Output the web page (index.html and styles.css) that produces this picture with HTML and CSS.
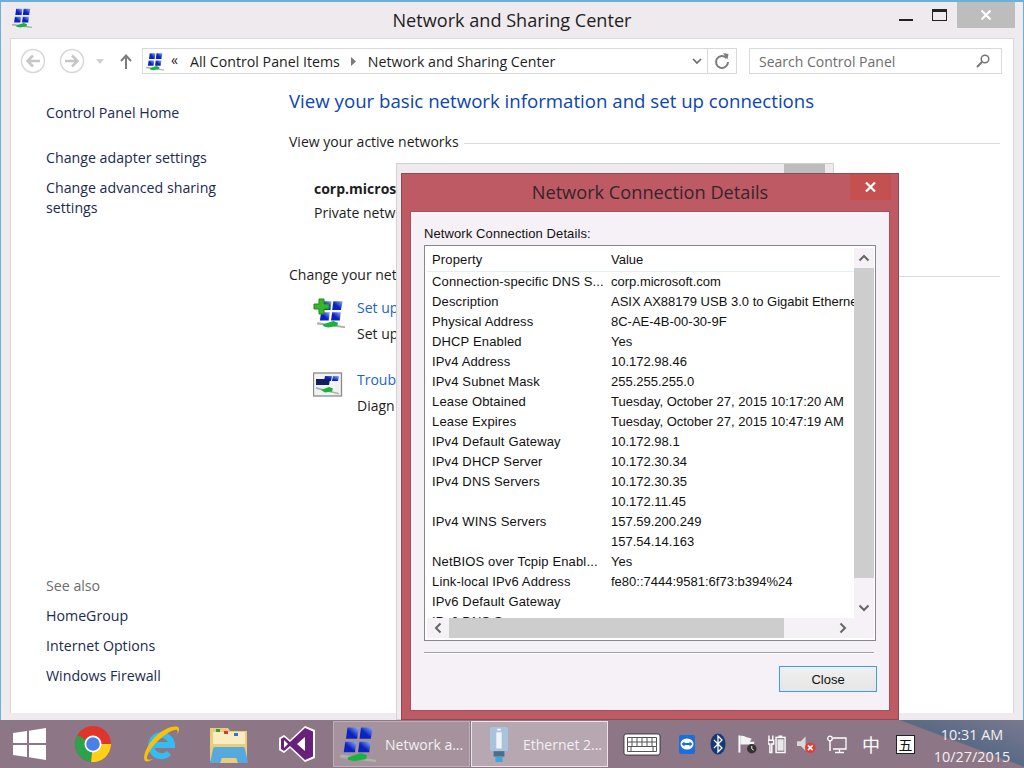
FILE: index.html
```html
<!DOCTYPE html>
<html>
<head>
  <title>Network and Sharing Center</title>
  <link rel="stylesheet" href="styles.css">
</head>
<body>
  <svg class="defs" width="0" height="0">
    <defs>
      <linearGradient id="pane" x1="0" y1="1" x2="1" y2="0">
        <stop offset="0.450" stop-color="#0a22c0"/>
        <stop offset="1" stop-color="#8fb6f7"/>
      </linearGradient>
    </defs>
    <symbol id="netIcon" viewBox="0 0 24 24">
      <path d="M5 1h7.500l-1 7.500H4z" fill="url(#pane)"/>
      <path d="M14 1h8l-1.500 7.500H13z" fill="url(#pane)"/>
      <path d="M3.500 10.500H11l-1 7H2.500z" fill="url(#pane)"/>
      <path d="M13 10.500h7.500l-1 7H12z" fill="url(#pane)"/>
      <path d="M0 19.500l1-.5 23 3.500V24h-1L0 21z" fill="#a9b4ae"/>
      <path d="M5 21l9-3 4 1.500-.5 2.500-8 1.500-4-1z" fill="#18b33e"/>
    </symbol>
  </svg>

  <div class="desktop">
    <div class="window">
      <div class="titlebar">
        <svg class="title-icon"><use href="#netIcon"/></svg>
        <span class="title-text">Network and Sharing Center</span>
        <div class="win-controls">
          <span class="win-min"></span>
          <span class="win-max"></span>
          <span class="win-close">
            <svg width="12" height="12" viewBox="0 0 12 12"><path d="M1.500 1.500l9 9M10.500 1.500l-9 9" stroke="#fff" stroke-width="2.200"/></svg>
          </span>
        </div>
      </div>

      <div class="client">
        <div class="toolbar">
          <span class="nav-btn">
            <svg width="26" height="26" viewBox="0 0 26 26"><circle cx="13" cy="13" r="11.500" fill="none" stroke="#d8d8d8" stroke-width="1.500"/><path d="M20 13H8M13 7.500L7.500 13l5.500 5.500" fill="none" stroke="#c6c6c6" stroke-width="2.500"/></svg>
          </span>
          <span class="nav-btn">
            <svg width="26" height="26" viewBox="0 0 26 26"><circle cx="13" cy="13" r="11.500" fill="none" stroke="#d8d8d8" stroke-width="1.500"/><path d="M6 13h12M13 7.500l5.500 5.500-5.500 5.500" fill="none" stroke="#c6c6c6" stroke-width="2.500"/></svg>
          </span>
          <svg class="nav-drop" width="8" height="5" viewBox="0 0 8 5"><path d="M0 0h8L4 5z" fill="#d0d0d0"/></svg>
          <svg class="nav-up" width="12" height="15" viewBox="0 0 12 15"><path d="M6 15V2M1 7l5-5.500L11 7" fill="none" stroke="#7d7d7d" stroke-width="2"/></svg>

          <div class="address">
            <svg class="addr-icon"><use href="#netIcon"/></svg>
            <span class="addr-more">«</span>
            <span class="crumb">All Control Panel Items</span>
            <svg class="crumb-arrow" width="5" height="9" viewBox="0 0 5 9"><path d="M0 0l5 4.500L0 9z" fill="#7a7a7a"/></svg>
            <span class="crumb">Network and Sharing Center</span>
            <svg class="addr-drop" width="10" height="7" viewBox="0 0 10 7"><path d="M1 1l4 4 4-4" fill="none" stroke="#6d6d6d" stroke-width="1.700"/></svg>
            <span class="addr-refresh">
              <svg width="16" height="17" viewBox="0 0 16 17"><path d="M12.500 5A6 6 0 1 0 14 9" fill="none" stroke="#7d7d7d" stroke-width="2"/><path d="M9 0l5.500 1-1 5.500z" fill="#7d7d7d"/></svg>
            </span>
          </div>

          <div class="search">
            <span>Search Control Panel</span>
            <svg width="14" height="14" viewBox="0 0 14 14"><circle cx="9" cy="5" r="3.800" fill="none" stroke="#757575" stroke-width="1.500"/><path d="M6 8l-5 5" stroke="#757575" stroke-width="2"/></svg>
          </div>
        </div>

        <div class="columns">
          <nav class="sidebar">
            <div class="side-top">
              <a>Control Panel Home</a>
              <a class="gap">Change adapter settings</a>
              <a>Change advanced sharing settings</a>
            </div>
            <div class="side-bottom">
              <div class="see-also">See also</div>
              <a>HomeGroup</a>
              <a>Internet Options</a>
              <a>Windows Firewall</a>
            </div>
          </nav>

          <main class="content">
            <h1>View your basic network information and set up connections</h1>
            <div class="section-head">View your active networks</div>
            <div class="active-net">
              <b>corp.micros</b>
              <span>Private netw</span>
            </div>
            <div class="section-head">Change your net</div>
            <div class="task">
              <svg class="task-icon" viewBox="0 0 32 32"><use href="#netIcon" x="4" y="2" width="28" height="28"/><path d="M6 1h5v5h5v5h-5v5H6v-5H1V6h5z" fill="#39b52a" stroke="#1f8a1a"/></svg>
              <div>
                <a>Set up</a>
                <p>Set up</p>
              </div>
            </div>
            <div class="task">
              <svg class="task-icon" viewBox="0 0 32 32">
                <rect x="0.500" y="3" width="28" height="23" fill="#f2f2f2" stroke="#8a8a8a" stroke-width="1.300"/>
                <path d="M12 6h7l-1 5h-7zM20 6h6l-1 5h-6z" fill="url(#pane)"/>
                <path d="M11 5v7h-7" fill="none" stroke="#1c2a5c" stroke-width="0"/>
                <path d="M3 9h14l-1 6H3z" fill="#12205e"/>
                <path d="M3 17l23 6v1.500L3 19z" fill="#a9b4ae"/>
                <path d="M8 20l8-3 4 1.500-1 3-7 1z" fill="#18b33e"/>
              </svg>
              <div>
                <a>Troub</a>
                <p>Diagn</p>
              </div>
            </div>
          </main>
        </div>
      </div>
    </div>

    <div class="back-dialog">
      <span class="back-close"></span>
    </div>

    <div class="dialog">
      <div class="dialog-title">
        <span>Network Connection Details</span>
        <span class="dialog-close">
          <svg width="11" height="10" viewBox="0 0 11 10"><path d="M1 0.500l9 9M10 0.500l-9 9" stroke="#fff" stroke-width="2.200"/></svg>
        </span>
      </div>
      <div class="dialog-body">
        <div class="dialog-label">Network Connection Details:</div>
        <div class="listbox">
          <div class="list-view">
            <div class="list-row list-head"><span>Property</span><span>Value</span></div>
            <div class="list-rows">
              <div class="list-row"><span>Connection-specific DNS S...</span><span>corp.microsoft.com</span></div>
              <div class="list-row"><span>Description</span><span>ASIX AX88179 USB 3.0 to Gigabit Ethernet Adapter</span></div>
              <div class="list-row"><span>Physical Address</span><span>8C-AE-4B-00-30-9F</span></div>
              <div class="list-row"><span>DHCP Enabled</span><span>Yes</span></div>
              <div class="list-row"><span>IPv4 Address</span><span>10.172.98.46</span></div>
              <div class="list-row"><span>IPv4 Subnet Mask</span><span>255.255.255.0</span></div>
              <div class="list-row"><span>Lease Obtained</span><span>Tuesday, October 27, 2015 10:17:20 AM</span></div>
              <div class="list-row"><span>Lease Expires</span><span>Tuesday, October 27, 2015 10:47:19 AM</span></div>
              <div class="list-row"><span>IPv4 Default Gateway</span><span>10.172.98.1</span></div>
              <div class="list-row"><span>IPv4 DHCP Server</span><span>10.172.30.34</span></div>
              <div class="list-row"><span>IPv4 DNS Servers</span><span>10.172.30.35</span></div>
              <div class="list-row"><span></span><span>10.172.11.45</span></div>
              <div class="list-row"><span>IPv4 WINS Servers</span><span>157.59.200.249</span></div>
              <div class="list-row"><span></span><span>157.54.14.163</span></div>
              <div class="list-row"><span>NetBIOS over Tcpip Enabl...</span><span>Yes</span></div>
              <div class="list-row"><span>Link-local IPv6 Address</span><span>fe80::7444:9581:6f73:b394%24</span></div>
              <div class="list-row"><span>IPv6 Default Gateway</span><span></span></div>
              <div class="list-row"><span>IPv6 DNS Servers</span><span></span></div>
            </div>
          </div>
          <div class="vscroll">
            <svg width="12" height="8" viewBox="0 0 12 8"><path d="M1.500 6.500L6 2l4.500 4.500" fill="none" stroke="#666" stroke-width="2"/></svg>
            <div class="vtrack"><div class="vthumb"></div></div>
            <svg width="12" height="8" viewBox="0 0 12 8"><path d="M1.500 1.500L6 6l4.500-4.500" fill="none" stroke="#666" stroke-width="2"/></svg>
          </div>
          <div class="hscroll">
            <svg width="8" height="12" viewBox="0 0 8 12"><path d="M6.500 1.500L2 6l4.500 4.500" fill="none" stroke="#666" stroke-width="2"/></svg>
            <div class="htrack"><div class="hthumb"></div></div>
            <svg width="8" height="12" viewBox="0 0 8 12"><path d="M1.500 1.500L6 6l-4.500 4.500" fill="none" stroke="#666" stroke-width="2"/></svg>
          </div>
        </div>
        <div class="dialog-rule"></div>
        <div class="dialog-actions"><button class="close-btn">Close</button></div>
      </div>
    </div>

    <div class="taskbar">
      <div class="pinned">
        <span class="pin pin-start">
          <svg width="34" height="34" viewBox="0 0 34 34"><path d="M0 6l14-2v12H0zM16 3.700L33 1v15H16zM0 18h14v12L0 28zM16 18h17v15l-17-2.700z" fill="#fff"/></svg>
        </span>
        <span class="pin">
          <svg width="38" height="38" viewBox="0 0 38 38">
            <circle cx="19" cy="19" r="18" fill="#e0352b"/>
            <path d="M19 19L3.400 10A18 18 0 0 0 17 36.900z" fill="#2ba24c"/>
            <path d="M19 19h18A18 18 0 0 1 17 36.900z" fill="#fcd116"/>
            <circle cx="19" cy="19" r="8.500" fill="#fff"/>
            <circle cx="19" cy="19" r="6.800" fill="#4a80e8"/>
          </svg>
        </span>
        <span class="pin">
          <svg width="38" height="38" viewBox="0 0 38 38">
            <path d="M10 20h20a10.500 10.500 0 1 0-3 8" fill="none" stroke="#35bdf0" stroke-width="6"/>
            <path d="M36 2c-6-2-16 3-24 11C5 21 0 31 3 36c2 1 5 0 8-2-4 1-6 1-6-1 0-4 6-13 13-19 7-6 14-10 17-9 1 1 1 3-1 6 3-4 4-7 2-9z" fill="#f4c20d"/>
          </svg>
        </span>
        <span class="pin">
          <svg width="40" height="38" viewBox="0 0 40 38">
            <path d="M1 3h18l2 3h17v30H1z" fill="#e9cd7c"/>
            <path d="M4 7h32v12H4z" fill="#f8ecc0"/>
            <path d="M7 4h4v3H7z" fill="#3a9a3c"/><path d="M15 6h4v3h-4z" fill="#d9382b"/><path d="M25 8h4v3h-4z" fill="#2a78c8"/>
            <path d="M6 22h28a2 2 0 0 1 2 2l3 14h-10l-2-5H13l-2 5H1l3-14a2 2 0 0 1 2-2z" fill="#55a9dd"/>
            <path d="M13 33h14l2 5H11z" fill="#e9cd7c"/>
          </svg>
        </span>
        <span class="pin">
          <svg width="38" height="38" viewBox="0 0 38 38">
            <path d="M27 1l10 4v28l-10 4-15-14-6 5-5-3V13l5-3 6 5z" fill="#fff"/>
            <path d="M27 3l8 3.500v25L27 35 12 21l-6 5-3-2V14l3-2 6 5zM27 12l-8 7 8 7zM6 15v8l4-4z" fill="#68217a" fill-rule="evenodd"/>
          </svg>
        </span>
      </div>

      <div class="task-btn">
        <svg class="task-btn-icon"><use href="#netIcon"/></svg>
        <span>Network a...</span>
      </div>
      <div class="task-btn active">
        <svg class="task-btn-icon" viewBox="0 0 24 40"><rect x="2" y="1" width="20" height="27" rx="2" fill="#a9c3dc"/><rect x="9" y="7" width="6" height="18" fill="#f0f4f8"/><rect x="10" y="3" width="4" height="2" fill="#fff"/><rect x="6" y="28" width="12" height="6" fill="#4e6c8c"/><rect x="8" y="34" width="8" height="6" fill="#3aa9d8"/></svg>
        <span>Ethernet 2...</span>
      </div>

      <div class="tray">
        <svg class="keyboard" width="38" height="23" viewBox="0 0 38 23">
          <rect x="1" y="1" width="36" height="21" rx="2" fill="#fff" stroke="#222" stroke-width="0.800"/>
          <path d="M4.500 4.500h29v9h-29zM4.500 9h29M9 4.500v9M14 4.500v9M19 4.500v9M24 4.500v9M29 4.500v9M8 13.500v5h22v-5M4.500 13.500v5h3.500M30 18.500h3.500v-5" fill="none" stroke="#555" stroke-width="1"/>
        </svg>
        <svg class="tray-viewer" width="18" height="22" viewBox="0 0 18 22"><rect x="1" y="2" width="16" height="19" rx="2" fill="#1a6fe0"/><ellipse cx="9" cy="11" rx="6.500" ry="5.500" fill="#fff"/><path d="M3.500 11l3-2.500v1.500h5V8.500l3 2.500-3 2.500V12h-5v1.500z" fill="#1a6fe0"/></svg>
        <svg class="tray-bt" width="16" height="22" viewBox="0 0 16 22"><ellipse cx="8" cy="11" rx="7.500" ry="10.500" fill="#123a78"/><path d="M4 7l8 8-4 4V3l4 4-8 8" fill="none" stroke="#fff" stroke-width="1.300"/></svg>
        <svg class="tray-flag" width="19" height="20" viewBox="0 0 20 20"><path d="M1.500 1v18" stroke="#fff" stroke-width="2"/><path d="M2.500 1.500c4-1 6 2 9 2l3 1-2 3 5 0-1 3H2.500z" fill="#f3f3f3"/><circle cx="14.500" cy="15" r="5" fill="#333"/><path d="M14.500 12v3l2 1.500" fill="none" stroke="#fff"/></svg>
        <svg width="18" height="20" viewBox="0 0 19 20"><path d="M1 1v5M5 1v5M0 6h6v4H4v9H2v-9H0z" fill="none" stroke="#fff" stroke-width="1.500"/><rect x="8.500" y="3" width="9.500" height="16" fill="none" stroke="#fff" stroke-width="1.500"/><rect x="11" y="1" width="4" height="2" fill="#fff"/><rect x="10" y="5" width="6.500" height="12" fill="#e8e8e8"/></svg>
        <svg width="19" height="20" viewBox="0 0 20 20"><path d="M0 7h4l5-5v15l-5-5H0z" fill="#d8d8d8"/><circle cx="14" cy="14" r="5.500" fill="#e53a32"/><path d="M11.500 11.500l5 5M16.500 11.500l-5 5" stroke="#fff" stroke-width="1.700"/></svg>
        <svg width="20" height="19" viewBox="0 0 20 19"><circle cx="3" cy="3.500" r="2.300" fill="none" stroke="#fff" stroke-width="1.300"/><path d="M3 6v10" stroke="#fff" stroke-width="1.500"/><path d="M6 3h13v11H6M12.500 14v3M8 17.500h9" fill="none" stroke="#fff" stroke-width="1.300"/></svg>
        <span class="ime">中</span>
        <span class="ime-box">五</span>
        <div class="clock"><div>10:31 AM</div><div>10/27/2015</div></div>
      </div>
    </div>
  </div>
</body>
</html>
```

FILE: styles.css
```css
* { box-sizing: border-box; }
html, body { margin: 0; padding: 0; overflow: hidden; }
a { display: block; }
.defs { position: absolute; }

.desktop {
  position: relative;
  width: 1024px;
  height: 768px;
  overflow: hidden;
  background: linear-gradient(160deg, #4a8fc0, #2d6c9f);
  font-family: "Open Sans", "Noto Sans", sans-serif;
}

/* main explorer window */
.window {
  position: absolute;
  left: 0;
  top: 0;
  width: 1024px;
  height: 720px;
  display: flex;
  flex-direction: column;
  background: #efeaee;
  border: 1px solid #6ab0dc;
  border-width: 2px 1px 0 1px;
}
.titlebar {
  height: 35px;
  display: flex;
  align-items: center;
  position: relative;
  flex: none;
}
.title-icon { width: 20px; height: 20px; margin: -3px 0 0 11px; }
.title-text {
  position: absolute;
  left: 0;
  right: 0;
  top: 5px;
  text-align: center;
  font-size: 18.100px;
  line-height: 26px;
  color: #1d1d1d;
}
.win-controls {
  position: absolute;
  right: 8px;
  top: 0;
  height: 26px;
  display: flex;
  align-items: flex-start;
}
.win-min { width: 14px; height: 2px; background: #222; margin: 17px 19px 0 0; }
.win-max { width: 15px; height: 12px; border: 1px solid #222; border-top-width: 3px; margin: 7px 10px 0 0; }
.win-close {
  width: 58px;
  height: 26px;
  background: #bdbdbd;
  display: flex;
  align-items: center;
  justify-content: center;
}

.client {
  margin: 1px 9px 7px 9px;
  flex: 1;
  background: #fff;
  border: 1px solid #d9d9d9;
  border-bottom: none;
  display: flex;
  flex-direction: column;
  min-height: 0;
}

.toolbar {
  height: 36px;
  margin-top: 4px;
  display: flex;
  align-items: center;
  flex: none;
  padding-left: 9px;
}
.nav-btn { width: 26px; height: 26px; margin-right: 13px; }
.nav-drop { margin-left: -2px; }
.nav-up { margin-left: 16px; margin-right: 10px; }
.address {
  width: 595px;
  height: 26px;
  border: 1px solid #d9d9d9;
  display: flex;
  align-items: center;
  font-size: 14.200px;
  color: #1d1d1d;
  position: relative;
}
.addr-icon { width: 18px; height: 19px; margin-left: 3px; flex: none; }
.addr-more { margin: -4px 12px 0 7px; font-size: 14px; }
.crumb-arrow { margin: 0 12px 0 11px; }
.addr-drop { margin-left: auto; margin-right: 5px; }
.addr-refresh {
  width: 29px;
  height: 24px;
  border-left: 1px solid #d9d9d9;
  display: flex;
  align-items: center;
  justify-content: center;
}
.search {
  width: 253px;
  height: 26px;
  margin-left: 12px;
  border: 1px solid #d9d9d9;
  display: flex;
  align-items: center;
  justify-content: space-between;
  padding: 0 11px 0 9px;
  font-size: 14px;
  color: #6d6d6d;
}

.columns { flex: 1; display: flex; min-height: 0; }
.sidebar {
  width: 278px;
  flex: none;
  padding: 24px 0 0 35px;
  display: flex;
  flex-direction: column;
  justify-content: space-between;
  font-size: 14.200px;
  line-height: 20px;
  color: #1a2a52;
}
.side-top a { margin-bottom: 10px; width: 200px; }
.side-top a.gap { margin-top: 25px; }
.side-bottom { padding-bottom: 17px; }
.side-bottom a { margin-bottom: 10px; }
.see-also { color: #6d6d6d; margin-bottom: 10px; }

.content { flex: 1; padding: 8px 0 0 0; font-size: 14px; color: #1d1d1d; }
.content h1 {
  margin: 0;
  font-size: 18.650px;
  line-height: 28px;
  font-weight: 400;
  color: #0a45b0;
  white-space: nowrap;
}
.section-head {
  display: flex;
  align-items: center;
  gap: 5px;
  line-height: 20px;
  margin-top: 17px;
  width: 711px;
  white-space: nowrap;
}
.section-head::after { content: ""; flex: 1; height: 1px; background: #d9d9d9; margin-top: 3px; }
.active-net { padding: 25px 0 0 25px; line-height: 24px; }
.active-net b, .active-net span { display: block; }
.active-net + .section-head { margin-top: 40px; }
.task { display: flex; gap: 12px; padding-left: 24px; margin-top: 13px; }
.task + .task { margin-top: 26px; }
.task-icon { width: 32px; height: 32px; flex: none; }
.task a { color: #1a63d0; line-height: 20px; }
.task p { margin: 6px 0 0; line-height: 20px; }

/* ethernet status dialog, behind */
.back-dialog {
  position: absolute;
  left: 396px;
  top: 163px;
  width: 438px;
  height: 557px;
  background: #efeaee;
  border: 1px solid #d2d2d2;
}
.back-close { position: absolute; right: 8px; top: 0; width: 41px; height: 20px; background: #bdbdbd; }

/* details dialog */
.dialog {
  position: absolute;
  left: 401px;
  top: 173px;
  width: 498px;
  height: 547px;
  background: #bd5a64;
  border: 1px solid #8d4a55;
  display: flex;
  flex-direction: column;
}
.dialog-title {
  height: 37px;
  flex: none;
  position: relative;
  text-align: center;
  font-size: 18.200px;
  line-height: 36px;
  color: #33262b;
}
.dialog-close {
  position: absolute;
  right: 7px;
  top: 0;
  width: 41px;
  height: 26px;
  background: #c55050;
  display: flex;
  align-items: center;
  justify-content: center;
}
.dialog-body {
  margin: 0 8px 8px;
  flex: 1;
  background: #f5f1f6;
  padding: 14px 13px 0;
  border: 1px solid #a84f5a;
  font-family: "Liberation Sans", Arial, sans-serif;
  font-size: 13px;
  color: #111;
}
.dialog-label { line-height: 16px; margin-bottom: 3px; letter-spacing: 0.100px; }
.listbox {
  width: 452px;
  height: 396px;
  background: #fff;
  border: 1px solid #86868f;
  display: grid;
  grid-template-columns: 1fr 20px;
  grid-template-rows: 1fr 20px;
  padding: 2px 1px 2px 2px;
  overflow: hidden;
}
.list-view { overflow: hidden; min-width: 0; }
.list-row { display: flex; height: 20px; line-height: 20px; white-space: nowrap; }
.list-row span:first-child { width: 184px; padding-left: 5px; flex: none; letter-spacing: 0.150px; }
.list-head { height: 24px; line-height: 24px; border-bottom: 1px solid #e5eef9; }
.vscroll, .hscroll { background: #f5f1f6; display: flex; align-items: center; }
.vscroll { flex-direction: column; justify-content: space-between; grid-row: 1; grid-column: 2; padding: 6px 0; }
.vtrack { flex: 1; width: 100%; margin: 6px 0 10px; }
.vthumb { height: 310px; background: #cdcdcd; }
.hscroll { grid-row: 2; grid-column: 1 / 3; justify-content: space-between; padding: 0 27px 0 7px; }
.htrack { flex: 1; height: 100%; margin: 0 8px 0 7px; }
.hthumb { width: 335px; height: 100%; background: #cdcdcd; }
.dialog-rule { height: 2px; margin-top: 11px; width: 450px; background: #a0a0a8; border-bottom: 1px solid #fff; }
.dialog-actions { display: flex; justify-content: flex-end; padding-top: 12px; width: 453px; }
.close-btn {
  width: 98px;
  height: 26px;
  background: linear-gradient(#f0f0f0, #e6e6e6);
  border: 1px solid #3d9cf0;
  font-family: inherit;
  font-size: 13px;
  color: #111;
  padding: 0;
}

/* taskbar */
.taskbar {
  position: absolute;
  left: 0;
  right: 0;
  top: 720px;
  height: 48px;
  display: flex;
  align-items: center;
  background: linear-gradient(20.600deg, #8d7686 0 89%, #596a85 89.400%, #7a7a90 100%);
  color: #f3f0f2;
  font-size: 14px;
}
.pinned { display: flex; width: 333px; flex: none; align-items: center; }
.pin { width: 68px; display: flex; justify-content: center; }
.pin-start { width: 59px; }
.task-btn {
  width: 137px;
  height: 46px;
  display: flex;
  align-items: center;
  gap: 9px;
  padding-left: 6px;
  background: #a5929d;
  border: 1px solid #bcaeb6;
  flex: none;
  margin-right: 1px;
}
.task-btn-icon { width: 36px; height: 36px; flex: none; }
.task-btn.active { background: #b6a7b0; border-color: #e8e4e8; padding-left: 9px; gap: 6px; }
.tray { display: flex; align-items: center; gap: 11px; padding-left: 14px; flex: 1; }
.tray-viewer { margin-left: 6px; }
.tray-bt { margin-left: 3px; }
.tray-flag { margin-left: 1px; }
.ime { font-family: "Noto Sans CJK SC", sans-serif; font-size: 18px; line-height: 20px; color: #fff; margin-left: 4px; }
.ime-box {
  font-family: "Noto Sans CJK SC", sans-serif;
  width: 19px;
  height: 19px;
  background: #fff;
  color: #111;
  border: 1px solid #222;
  font-size: 14px;
  line-height: 17px;
  text-align: center;
  margin-left: 5px;
}
.clock { width: 90px; text-align: center; font-size: 14.400px; line-height: 22px; white-space: nowrap; margin: 3px 0 0 1px; }
```
